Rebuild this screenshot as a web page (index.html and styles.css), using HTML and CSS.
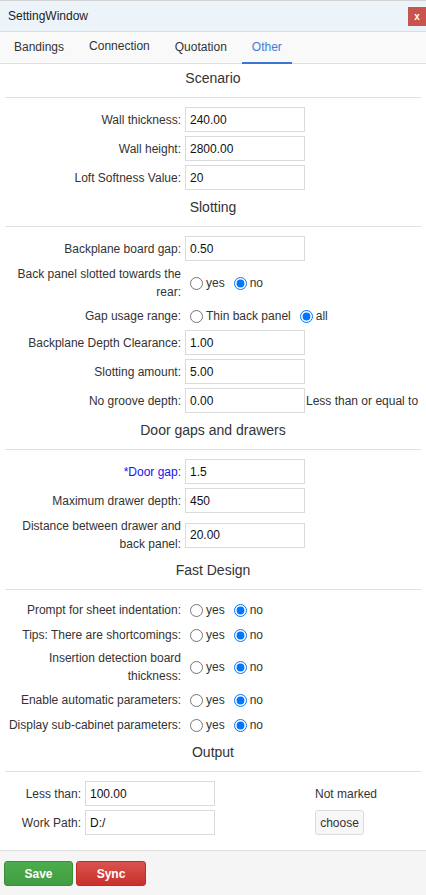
FILE: index.html
```html
<!DOCTYPE html>
<html lang="en">
<head>
<meta charset="utf-8">
<title>SettingWindow</title>
<link rel="stylesheet" href="styles.css">
</head>
<body>
<div class="window">
  <header class="titlebar">
    <span class="title">SettingWindow</span>
    <button class="close" type="button">x</button>
  </header>
  <nav class="tabs">
    <span class="tab">Bandings</span>
    <span class="tab tab-raised">Connection</span>
    <span class="tab">Quotation</span>
    <span class="tab active">Other</span>
  </nav>
  <main class="content">
    <section class="group">
      <h2 class="group-title">Scenario</h2>
      <div class="row"><label class="lbl">Wall thickness:</label><div class="ctl"><input class="field" value="240.00"></div></div>
      <div class="row"><label class="lbl">Wall height:</label><div class="ctl"><input class="field" value="2800.00"></div></div>
      <div class="row"><label class="lbl">Loft Softness Value:</label><div class="ctl"><input class="field" value="20"></div></div>
    </section>

    <section class="group">
      <h2 class="group-title">Slotting</h2>
      <div class="row"><label class="lbl">Backplane board gap:</label><div class="ctl"><input class="field" value="0.50"></div></div>
      <div class="row"><label class="lbl">Back panel slotted towards the rear:</label>
        <div class="ctl"><label class="opt"><input type="radio" name="r1">yes</label><label class="opt"><input type="radio" name="r1" checked>no</label></div></div>
      <div class="row"><label class="lbl">Gap usage range:</label>
        <div class="ctl"><label class="opt"><input type="radio" name="r2">Thin back panel</label><label class="opt"><input type="radio" name="r2" checked>all</label></div></div>
      <div class="row"><label class="lbl">Backplane Depth Clearance:</label><div class="ctl"><input class="field" value="1.00"></div></div>
      <div class="row"><label class="lbl">Slotting amount:</label><div class="ctl"><input class="field" value="5.00"></div></div>
      <div class="row"><label class="lbl">No groove depth:</label><div class="ctl"><input class="field" value="0.00"><span class="suffix">Less than or equal to</span></div></div>
    </section>

    <section class="group">
      <h2 class="group-title">Door gaps and drawers</h2>
      <div class="row"><label class="lbl lbl-required">*Door gap:</label><div class="ctl"><input class="field" value="1.5"></div></div>
      <div class="row"><label class="lbl">Maximum drawer depth:</label><div class="ctl"><input class="field" value="450"></div></div>
      <div class="row"><label class="lbl">Distance between drawer and back panel:</label><div class="ctl"><input class="field" value="20.00"></div></div>
    </section>

    <section class="group">
      <h2 class="group-title">Fast Design</h2>
      <div class="row"><label class="lbl">Prompt for sheet indentation:</label>
        <div class="ctl"><label class="opt"><input type="radio" name="r3">yes</label><label class="opt"><input type="radio" name="r3" checked>no</label></div></div>
      <div class="row"><label class="lbl">Tips: There are shortcomings:</label>
        <div class="ctl"><label class="opt"><input type="radio" name="r4">yes</label><label class="opt"><input type="radio" name="r4" checked>no</label></div></div>
      <div class="row"><label class="lbl">Insertion detection board thickness:</label>
        <div class="ctl"><label class="opt"><input type="radio" name="r5">yes</label><label class="opt"><input type="radio" name="r5" checked>no</label></div></div>
      <div class="row"><label class="lbl">Enable automatic parameters:</label>
        <div class="ctl"><label class="opt"><input type="radio" name="r6">yes</label><label class="opt"><input type="radio" name="r6" checked>no</label></div></div>
      <div class="row"><label class="lbl">Display sub-cabinet parameters:</label>
        <div class="ctl"><label class="opt"><input type="radio" name="r7">yes</label><label class="opt"><input type="radio" name="r7" checked>no</label></div></div>
    </section>

    <section class="group">
      <h2 class="group-title">Output</h2>
      <div class="orow"><label class="olbl">Less than:</label><input class="field ofield" value="100.00"><span class="oside">Not marked</span></div>
      <div class="orow"><label class="olbl">Work Path:</label><input class="field ofield" value="D:/"><button class="oside choose" type="button">choose</button></div>
    </section>
  </main>
  <footer class="footer">
    <button class="btn btn-save" type="button">Save</button>
    <button class="btn btn-sync" type="button">Sync</button>
  </footer>
</div>
</body>
</html>
```

FILE: styles.css
```css
* { box-sizing: border-box; }
html, body { margin: 0; height: 100%; }
body {
  font-family: "Liberation Sans", Arial, sans-serif;
  font-size: 12px;
  color: #333;
  background: #fff;
}
.window {
  height: 100vh;
  display: flex;
  flex-direction: column;
  border-top: 1px solid #d2d2d2;
}

/* title bar */
.titlebar {
  flex: none;
  height: 31px;
  display: flex;
  align-items: center;
  justify-content: space-between;
  padding-left: 8px;
  background: #edf4f9;
  border-bottom: 1px solid #dcdcdc;
}
.title { color: #222; font-size: 12px; }
.close {
  width: 18px;
  height: 19px;
  padding: 0;
  border: none;
  background: #c9534f;
  color: #fff;
  font: bold 10px "Liberation Sans", Arial, sans-serif;
  line-height: 19px;
}

/* tabs */
.tabs {
  flex: none;
  height: 32px;
  display: flex;
  gap: 5px;
  padding-left: 4px;
  background: #f9f9f9;
  border-bottom: 1px solid #dedede;
}
.tab {
  position: relative;
  padding: 0 10px;
  line-height: 31px;
  color: #333;
}
.tab-raised { line-height: 29px; }
.tab.active { color: #3f7bd8; }
.tab.active::after {
  content: "";
  position: absolute;
  left: 0;
  right: 0;
  bottom: -1px;
  height: 2px;
  background: #3a76d6;
}

/* content */
.content { flex: 1; overflow: hidden; }
.group-title {
  margin: 0 5px 9px;
  padding: 3px 0 9px;
  font-size: 14px;
  font-weight: normal;
  line-height: 20px;
  text-align: center;
  color: #333;
  border-bottom: 1px solid #e0e0e0;
}
.group:first-child .group-title { padding-top: 4px; }
.row {
  display: grid;
  grid-template-columns: 176px 1fr;
  column-gap: 4px;
  align-items: center;
  min-height: 21px;
  padding-left: 5px;
  margin-bottom: 4px;
}
.lbl {
  text-align: right;
  line-height: 18px;
}
.lbl-required { color: #1515f0; }
.ctl {
  display: flex;
  align-items: center;
}
.field {
  width: 120px;
  height: 25px;
  padding: 0 4px;
  border: 1px solid #dadada;
  border-radius: 0;
  font: 12px "Liberation Sans", Arial, sans-serif;
  color: #111;
  background: #fff;
  outline: none;
}
.suffix { margin-left: 1px; }
.opt {
  display: inline-flex;
  align-items: center;
  margin-right: 4px;
  line-height: 18px;
}
.opt input {
  width: 13px;
  height: 13px;
  margin: 1px 3px 0 5px;
}

/* output */
.orow {
  display: flex;
  align-items: center;
  padding-left: 5px;
  margin-bottom: 4px;
}
.olbl {
  width: 76px;
  margin-right: 4px;
  text-align: right;
}
.ofield { width: 130px; }
.oside { margin-left: 100px; }
.choose {
  width: 49px;
  height: 25px;
  padding: 0;
  border: 1px solid #dcdcdc;
  border-radius: 3px;
  background: #f7f7f7;
  color: #333;
  font: 12px "Liberation Sans", Arial, sans-serif;
}

/* footer */
.footer {
  flex: none;
  height: 45px;
  display: flex;
  align-items: flex-start;
  gap: 3px;
  padding: 10px 4px 0;
  background: #f5f5f5;
  border-top: 1px solid #dedede;
}
.btn {
  height: 25px;
  padding: 0;
  border: 1px solid;
  border-radius: 3px;
  color: #fff;
  font: bold 12px "Liberation Sans", Arial, sans-serif;
}
.btn-save {
  width: 69px;
  background: linear-gradient(#4cad4c, #419d41);
  border-color: #3b8f3b;
}
.btn-sync {
  width: 70px;
  background: linear-gradient(#d9534f, #c9302c);
  border-color: #b9302b;
}
```
